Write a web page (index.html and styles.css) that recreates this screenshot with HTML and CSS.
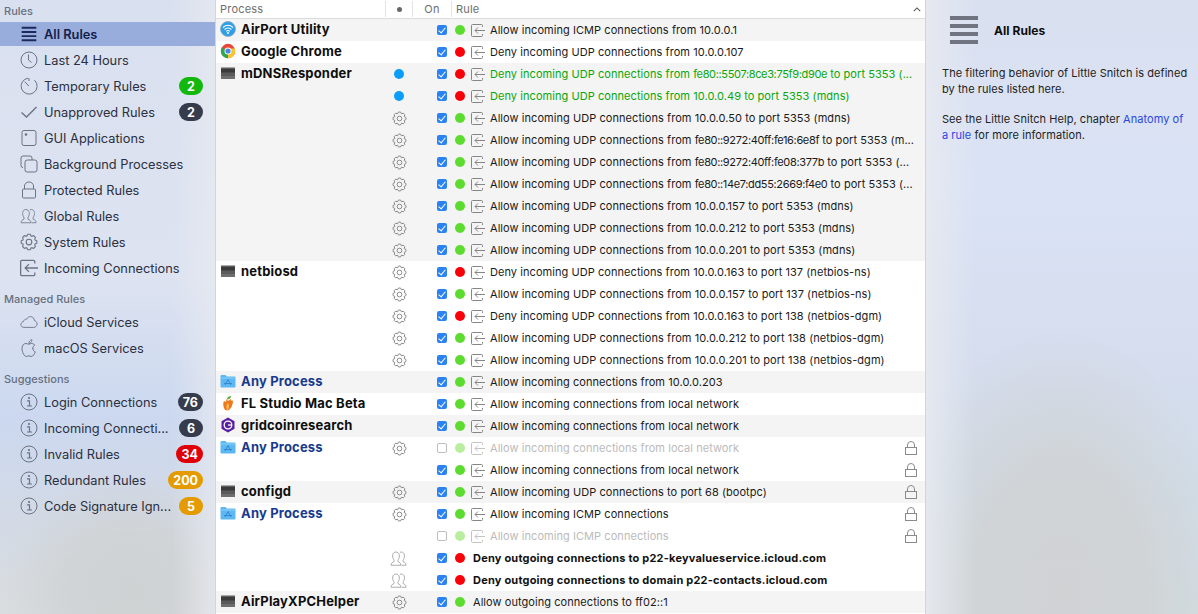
FILE: index.html
```html
<!DOCTYPE html>
<html lang="en">
<head>
<meta charset="utf-8">
<title>Little Snitch Rules</title>
<link rel="stylesheet" href="styles.css">
</head>
<body>
<svg class="defs" width="0" height="0" aria-hidden="true">
  <defs>
    <symbol id="i-list" viewBox="0 0 16 16"><path d="M1.5 2.5h13M1.5 6.2h13M1.5 9.9h13M1.5 13.5h13" fill="none" stroke="currentColor" stroke-width="1.7"/></symbol>
    <symbol id="i-clock" viewBox="0 0 18 18"><circle cx="9" cy="9" r="8" fill="none" stroke="currentColor"/><path d="M8.5 3.5V9l3 2.5" fill="none" stroke="currentColor"/></symbol>
    <symbol id="i-timer" viewBox="0 0 18 18"><path d="M8 1.2A8 8 0 1 0 14.5 3.2" fill="none" stroke="currentColor"/><path d="M4.6 4.8L9 9" fill="none" stroke="currentColor"/><path d="M9 1v3" fill="none" stroke="currentColor"/></symbol>
    <symbol id="i-check" viewBox="0 0 18 18"><path d="M1.5 9.5L6.5 14L16.5 4" fill="none" stroke="currentColor" stroke-width="1.4"/></symbol>
    <symbol id="i-app" viewBox="0 0 18 18"><rect x="2" y="1.5" width="14" height="15" rx="2" fill="none" stroke="currentColor"/><circle cx="6" cy="5.5" r="1.3" fill="currentColor"/></symbol>
    <symbol id="i-stack" viewBox="0 0 18 18"><path d="M3 12.5a2 2 0 0 1-2-2V3a2 2 0 0 1 2-2h7a2 2 0 0 1 2 2v2" fill="none" stroke="currentColor"/><rect x="5" y="5" width="12" height="12" rx="2.2" fill="none" stroke="currentColor"/></symbol>
    <symbol id="i-lock" viewBox="0 0 16 18"><path d="M3.5 8V5a4.5 4 0 0 1 9 0v3" fill="none" stroke="currentColor"/><rect x="1.5" y="8" width="13" height="9" rx="1" fill="none" stroke="currentColor"/></symbol>
    <symbol id="i-lock-sm" viewBox="0 0 12 14"><path d="M2.5 6.500V4a3.500 3.500 0 0 1 7 0v2.500" fill="none" stroke="currentColor"/><rect x=".5" y="6.500" width="11" height="7" fill="none" stroke="currentColor"/></symbol>
    <symbol id="i-people" viewBox="0 0 20 16"><path d="M6.5 15.5H1.2c0-2.5 1.5-3.3 3.2-4 .4-1 .2-1.700-.4-2.500C3 7.500 2.800 5.700 3 4 3.300 2 4.700.8 6.500.8S10 2 10.300 4c.2 1.700 0 3.500-1 5-.6.800-.8 1.500-.4 2.500 1.700.7 3.200 1.500 3.200 4H6.500z" fill="none" stroke="currentColor" stroke-width=".9"/><path d="M11 1.100c.5-.2 1-.3 1.500-.3 1.800 0 3.200 1.200 3.500 3.200.2 1.700 0 3.500-1 5-.6.800-.8 1.500-.4 2.500 1.700.7 3.200 1.500 3.200 4h-5" fill="none" stroke="currentColor" stroke-width=".9"/></symbol>
    <symbol id="i-gear" viewBox="0 0 16 16">
      <g fill="none" stroke="currentColor" stroke-width="1">
        <path d="M5.930 3.010L6.910 1.090H9.090L10.070 3.010"/>
        <path transform="rotate(45 8 8)" d="M5.930 3.010L6.910 1.090H9.090L10.070 3.010"/>
        <path transform="rotate(90 8 8)" d="M5.930 3.010L6.910 1.090H9.090L10.070 3.010"/>
        <path transform="rotate(135 8 8)" d="M5.930 3.010L6.910 1.090H9.090L10.070 3.010"/>
        <path transform="rotate(180 8 8)" d="M5.930 3.010L6.910 1.090H9.090L10.070 3.010"/>
        <path transform="rotate(225 8 8)" d="M5.930 3.010L6.910 1.090H9.090L10.070 3.010"/>
        <path transform="rotate(270 8 8)" d="M5.930 3.010L6.910 1.090H9.090L10.070 3.010"/>
        <path transform="rotate(315 8 8)" d="M5.930 3.010L6.910 1.090H9.090L10.070 3.010"/>
        <circle cx="8" cy="8" r="2.500"/>
      </g>
    </symbol>
    <symbol id="i-in" viewBox="0 0 14 13"><path d="M11.500 3V1.500a1 1 0 0 0-1-1H1.500a1 1 0 0 0-1 1v10a1 1 0 0 0 1 1h9a1 1 0 0 0 1-1V10" fill="none" stroke="currentColor"/><path d="M14 6.500H4M7 3.500l-3 3 3 3" fill="none" stroke="currentColor"/></symbol>
    <symbol id="i-cloud" viewBox="0 0 20 14"><path d="M4.500 13C2.300 13 1 11.500 1 9.800c0-1.700 1.200-3 2.800-3.100C4.400 4.500 6 3.600 7.300 3.900 8.300 2 9.800 1 11.500 1c2.600 0 4.400 2 4.500 4.500 1.800.3 3 1.800 3 3.700 0 2-1.500 3.800-3.700 3.800z" fill="none" stroke="currentColor"/></symbol>
    <symbol id="i-apple" viewBox="0 0 16 18"><path d="M11.800 9.500c0-1.800 1-2.700 2-3.400C13 5 11.700 4.500 10.500 4.500c-1.300 0-2 .7-2.800.7s-1.600-.7-2.800-.7C3 4.500 1 6.200 1 9.500c0 3.500 2.300 8 4.300 8 1 0 1.500-.7 2.500-.7s1.500.7 2.500.7c1.700 0 3.300-2.800 4-4.700-1.500-.6-2.500-1.800-2.500-3.800z" fill="none" stroke="currentColor"/><path d="M7.800 4.500C7.800 2.500 9 1 11 .6c.1 2-1.200 3.700-3.200 3.900z" fill="none" stroke="currentColor" stroke-width=".8"/></symbol>
    <symbol id="i-info" viewBox="0 0 18 18"><circle cx="9" cy="9" r="8" fill="none" stroke="currentColor"/><circle cx="9" cy="5" r="1.100" fill="currentColor"/><path d="M7 7.800h2.500v5M7 13h5" fill="none" stroke="currentColor" stroke-width="1.200"/></symbol>
    <symbol id="a-wifi" viewBox="0 0 16 16"><circle cx="8" cy="8" r="7.500" fill="#2f9fe8" stroke="#8aa9bd" stroke-width=".8"/><path d="M3 6.500c3-2.700 7-2.700 10 0M4.600 8.500c2-1.800 4.800-1.800 6.800 0M6.200 10.300c1-.9 2.600-.9 3.600 0" fill="none" stroke="#fff" stroke-width="1.100"/><circle cx="8" cy="12" r="1" fill="#fff"/></symbol>
    <symbol id="a-chrome" viewBox="0 0 16 16"><circle cx="8" cy="8" r="7.200" fill="#e8483a"/><path d="M8 8L1.800 4.400A7.200 7.200 0 0 0 8 15.200z" fill="#2fa750"/><path d="M8 8v7.200A7.200 7.200 0 0 0 14.800 5.500H8z" fill="#f7c62f"/><circle cx="8" cy="8" r="3.500" fill="#fff"/><circle cx="8" cy="8" r="2.600" fill="#4a86e8"/></symbol>
    <symbol id="a-term" viewBox="0 0 16 16">
      <rect x="1" y="2" width="14" height="12" fill="#5a5a5a"/>
      <rect x="1" y="2" width="14" height="1.500" fill="#a8a8a8"/>
      <rect x="1" y="3.500" width="14" height="4" fill="#3a3a3a"/>
      <rect x="1" y="11" width="14" height="3" fill="#6e6e6e"/>
    </symbol>
    <symbol id="a-folder" viewBox="0 0 16 15"><path d="M.5 2.500a1 1 0 0 1 1-1h4l1.300 1.500h7.700a1 1 0 0 1 1 1v9a1 1 0 0 1-1 1h-13a1 1 0 0 1-1-1z" fill="#5cb8f2"/><path d="M.5 4.500h15" stroke="#8bd0f8" stroke-width="1"/><path d="M8 6l-3 5.500M8 6l3 5.500M4 10h8" fill="none" stroke="#2f7fc9" stroke-width=".8"/></symbol>
    <symbol id="a-fl" viewBox="0 0 16 16"><path d="M5 15C3 12 2.800 8 4 6l2 1 .5-3L8 6l3-2 .5 2 1.500-.5C13 10 11 14 8 15.500z" fill="#ea7a1f"/><path d="M7 15c-1-3-.8-5 .5-7l1.500 2c0 2-.5 4-1 5z" fill="#fbbb4b"/><path d="M7 4.500C7 2.500 8.500 1 11 1 11 3 9.500 4.500 7 4.500z" fill="#5fae3a"/></symbol>
    <symbol id="a-grid" viewBox="0 0 16 16"><path d="M8 .5l6.500 3.700v7.600L8 15.500l-6.500-3.700V4.200z" fill="#5a1fa0"/><circle cx="8" cy="8" r="3.800" fill="none" stroke="#fff" stroke-width="1.300"/><path d="M8 8h3.500" stroke="#fff" stroke-width="1.300"/></symbol>
  </defs>
</svg>

<div class="window">
  <aside class="sidebar">
    <h2 class="side-head side-head-first">Rules</h2>
    <ul class="side-list">
      <li class="side-item selected"><svg class="side-icon"><use href="#i-list"/></svg><span class="side-label">All Rules</span></li>
      <li class="side-item"><svg class="side-icon"><use href="#i-clock"/></svg><span class="side-label">Last 24 Hours</span></li>
      <li class="side-item"><svg class="side-icon"><use href="#i-timer"/></svg><span class="side-label">Temporary Rules</span><span class="badge green">2</span></li>
      <li class="side-item"><svg class="side-icon"><use href="#i-check"/></svg><span class="side-label">Unapproved Rules</span><span class="badge dark">2</span></li>
      <li class="side-item"><svg class="side-icon"><use href="#i-app"/></svg><span class="side-label">GUI Applications</span></li>
      <li class="side-item"><svg class="side-icon"><use href="#i-stack"/></svg><span class="side-label">Background Processes</span></li>
      <li class="side-item"><svg class="side-icon"><use href="#i-lock"/></svg><span class="side-label">Protected Rules</span></li>
      <li class="side-item"><svg class="side-icon"><use href="#i-people"/></svg><span class="side-label">Global Rules</span></li>
      <li class="side-item"><svg class="side-icon"><use href="#i-gear"/></svg><span class="side-label">System Rules</span></li>
      <li class="side-item"><svg class="side-icon"><use href="#i-in"/></svg><span class="side-label">Incoming Connections</span></li>
    </ul>
    <h2 class="side-head">Managed Rules</h2>
    <ul class="side-list">
      <li class="side-item"><svg class="side-icon"><use href="#i-cloud"/></svg><span class="side-label">iCloud Services</span></li>
      <li class="side-item"><svg class="side-icon"><use href="#i-apple"/></svg><span class="side-label">macOS Services</span></li>
    </ul>
    <h2 class="side-head">Suggestions</h2>
    <ul class="side-list">
      <li class="side-item"><svg class="side-icon"><use href="#i-info"/></svg><span class="side-label">Login Connections</span><span class="badge dark">76</span></li>
      <li class="side-item"><svg class="side-icon"><use href="#i-info"/></svg><span class="side-label">Incoming Connecti...</span><span class="badge dark">6</span></li>
      <li class="side-item"><svg class="side-icon"><use href="#i-info"/></svg><span class="side-label">Invalid Rules</span><span class="badge red">34</span></li>
      <li class="side-item"><svg class="side-icon"><use href="#i-info"/></svg><span class="side-label">Redundant Rules</span><span class="badge orange">200</span></li>
      <li class="side-item"><svg class="side-icon"><use href="#i-info"/></svg><span class="side-label">Code Signature Ign...</span><span class="badge orange">5</span></li>
    </ul>
  </aside>

  <main class="table">
    <div class="thead">
      <div class="th th-process">Process</div>
      <div class="th th-dot"><span class="head-dot"></span></div>
      <div class="th th-on">On</div>
      <div class="th th-rule">Rule<svg class="sort" viewBox="0 0 10 6"><path d="M1 5l4-4 4 4" fill="none" stroke="currentColor" stroke-width="1.300"/></svg></div>
    </div>

    <div class="group alt">
      <div class="row"><div class="proc"><svg class="app"><use href="#a-wifi"/></svg><b class="name">AirPort Utility</b></div><div class="mark"></div><div class="on"><span class="box"></span></div><span class="st allow"></span><svg class="dir"><use href="#i-in"/></svg><span class="text">Allow incoming ICMP connections from 10.0.0.1</span></div>
    </div>
    <div class="group">
      <div class="row"><div class="proc"><svg class="app"><use href="#a-chrome"/></svg><b class="name">Google Chrome</b></div><div class="mark"></div><div class="on"><span class="box"></span></div><span class="st deny"></span><svg class="dir"><use href="#i-in"/></svg><span class="text">Deny incoming UDP connections from 10.0.0.107</span></div>
    </div>
    <div class="group alt">
      <div class="row"><div class="proc"><svg class="app"><use href="#a-term"/></svg><b class="name">mDNSResponder</b></div><div class="mark"><span class="blue"></span></div><div class="on"><span class="box"></span></div><span class="st deny"></span><svg class="dir"><use href="#i-in"/></svg><span class="text new">Deny incoming UDP connections from <span class="addr">fe80::5507:8ce3:75f9:d90e</span> to port 5353 (...</span></div>
      <div class="row"><div class="proc"></div><div class="mark"><span class="blue"></span></div><div class="on"><span class="box"></span></div><span class="st deny"></span><svg class="dir"><use href="#i-in"/></svg><span class="text new">Deny incoming UDP connections from 10.0.0.49 to port 5353 (mdns)</span></div>
      <div class="row"><div class="proc"></div><div class="mark"><svg class="gear"><use href="#i-gear"/></svg></div><div class="on"><span class="box"></span></div><span class="st allow"></span><svg class="dir"><use href="#i-in"/></svg><span class="text">Allow incoming UDP connections from 10.0.0.50 to port 5353 (mdns)</span></div>
      <div class="row"><div class="proc"></div><div class="mark"><svg class="gear"><use href="#i-gear"/></svg></div><div class="on"><span class="box"></span></div><span class="st allow"></span><svg class="dir"><use href="#i-in"/></svg><span class="text">Allow incoming UDP connections from <span class="addr">fe80::9272:40ff:fe16:6e8f</span> to port 5353 (m...</span></div>
      <div class="row"><div class="proc"></div><div class="mark"><svg class="gear"><use href="#i-gear"/></svg></div><div class="on"><span class="box"></span></div><span class="st allow"></span><svg class="dir"><use href="#i-in"/></svg><span class="text">Allow incoming UDP connections from <span class="addr">fe80::9272:40ff:fe08:377b</span> to port 5353 (...</span></div>
      <div class="row"><div class="proc"></div><div class="mark"><svg class="gear"><use href="#i-gear"/></svg></div><div class="on"><span class="box"></span></div><span class="st allow"></span><svg class="dir"><use href="#i-in"/></svg><span class="text">Allow incoming UDP connections from <span class="addr">fe80::14e7:dd55:2669:f4e0</span> to port 5353 (...</span></div>
      <div class="row"><div class="proc"></div><div class="mark"><svg class="gear"><use href="#i-gear"/></svg></div><div class="on"><span class="box"></span></div><span class="st allow"></span><svg class="dir"><use href="#i-in"/></svg><span class="text">Allow incoming UDP connections from 10.0.0.157 to port 5353 (mdns)</span></div>
      <div class="row"><div class="proc"></div><div class="mark"><svg class="gear"><use href="#i-gear"/></svg></div><div class="on"><span class="box"></span></div><span class="st allow"></span><svg class="dir"><use href="#i-in"/></svg><span class="text">Allow incoming UDP connections from 10.0.0.212 to port 5353 (mdns)</span></div>
      <div class="row"><div class="proc"></div><div class="mark"><svg class="gear"><use href="#i-gear"/></svg></div><div class="on"><span class="box"></span></div><span class="st allow"></span><svg class="dir"><use href="#i-in"/></svg><span class="text">Allow incoming UDP connections from 10.0.0.201 to port 5353 (mdns)</span></div>
    </div>
    <div class="group">
      <div class="row"><div class="proc"><svg class="app"><use href="#a-term"/></svg><b class="name">netbiosd</b></div><div class="mark"><svg class="gear"><use href="#i-gear"/></svg></div><div class="on"><span class="box"></span></div><span class="st deny"></span><svg class="dir"><use href="#i-in"/></svg><span class="text">Deny incoming UDP connections from 10.0.0.163 to port 137 (netbios-ns)</span></div>
      <div class="row"><div class="proc"></div><div class="mark"><svg class="gear"><use href="#i-gear"/></svg></div><div class="on"><span class="box"></span></div><span class="st allow"></span><svg class="dir"><use href="#i-in"/></svg><span class="text">Allow incoming UDP connections from 10.0.0.157 to port 137 (netbios-ns)</span></div>
      <div class="row"><div class="proc"></div><div class="mark"><svg class="gear"><use href="#i-gear"/></svg></div><div class="on"><span class="box"></span></div><span class="st deny"></span><svg class="dir"><use href="#i-in"/></svg><span class="text">Deny incoming UDP connections from 10.0.0.163 to port 138 (netbios-dgm)</span></div>
      <div class="row"><div class="proc"></div><div class="mark"><svg class="gear"><use href="#i-gear"/></svg></div><div class="on"><span class="box"></span></div><span class="st allow"></span><svg class="dir"><use href="#i-in"/></svg><span class="text">Allow incoming UDP connections from 10.0.0.212 to port 138 (netbios-dgm)</span></div>
      <div class="row"><div class="proc"></div><div class="mark"><svg class="gear"><use href="#i-gear"/></svg></div><div class="on"><span class="box"></span></div><span class="st allow"></span><svg class="dir"><use href="#i-in"/></svg><span class="text">Allow incoming UDP connections from 10.0.0.201 to port 138 (netbios-dgm)</span></div>
    </div>
    <div class="group alt">
      <div class="row"><div class="proc"><svg class="app"><use href="#a-folder"/></svg><b class="name any">Any Process</b></div><div class="mark"></div><div class="on"><span class="box"></span></div><span class="st allow"></span><svg class="dir"><use href="#i-in"/></svg><span class="text">Allow incoming connections from 10.0.0.203</span></div>
    </div>
    <div class="group">
      <div class="row"><div class="proc"><svg class="app"><use href="#a-fl"/></svg><b class="name">FL Studio Mac Beta</b></div><div class="mark"></div><div class="on"><span class="box"></span></div><span class="st allow"></span><svg class="dir"><use href="#i-in"/></svg><span class="text">Allow incoming connections from local network</span></div>
    </div>
    <div class="group alt">
      <div class="row"><div class="proc"><svg class="app"><use href="#a-grid"/></svg><b class="name">gridcoinresearch</b></div><div class="mark"></div><div class="on"><span class="box"></span></div><span class="st allow"></span><svg class="dir"><use href="#i-in"/></svg><span class="text">Allow incoming connections from local network</span></div>
    </div>
    <div class="group">
      <div class="row off"><div class="proc"><svg class="app"><use href="#a-folder"/></svg><b class="name any">Any Process</b></div><div class="mark"><svg class="gear"><use href="#i-gear"/></svg></div><div class="on"><span class="box"></span></div><span class="st allow"></span><svg class="dir"><use href="#i-in"/></svg><span class="text">Allow incoming connections from local network</span><svg class="lock"><use href="#i-lock-sm"/></svg></div>
      <div class="row"><div class="proc"></div><div class="mark"></div><div class="on"><span class="box"></span></div><span class="st allow"></span><svg class="dir"><use href="#i-in"/></svg><span class="text">Allow incoming connections from local network</span><svg class="lock"><use href="#i-lock-sm"/></svg></div>
    </div>
    <div class="group alt">
      <div class="row"><div class="proc"><svg class="app"><use href="#a-term"/></svg><b class="name">configd</b></div><div class="mark"><svg class="gear"><use href="#i-gear"/></svg></div><div class="on"><span class="box"></span></div><span class="st allow"></span><svg class="dir"><use href="#i-in"/></svg><span class="text">Allow incoming UDP connections to port 68 (bootpc)</span><svg class="lock"><use href="#i-lock-sm"/></svg></div>
    </div>
    <div class="group">
      <div class="row"><div class="proc"><svg class="app"><use href="#a-folder"/></svg><b class="name any">Any Process</b></div><div class="mark"><svg class="gear"><use href="#i-gear"/></svg></div><div class="on"><span class="box"></span></div><span class="st allow"></span><svg class="dir"><use href="#i-in"/></svg><span class="text">Allow incoming ICMP connections</span><svg class="lock"><use href="#i-lock-sm"/></svg></div>
      <div class="row off"><div class="proc"></div><div class="mark"></div><div class="on"><span class="box"></span></div><span class="st allow"></span><svg class="dir"><use href="#i-in"/></svg><span class="text">Allow incoming ICMP connections</span><svg class="lock"><use href="#i-lock-sm"/></svg></div>
      <div class="row"><div class="proc"></div><div class="mark"><svg class="people"><use href="#i-people"/></svg></div><div class="on"><span class="box"></span></div><span class="st deny"></span><span class="text strong">Deny outgoing connections to p22-keyvalueservice.icloud.com</span></div>
      <div class="row"><div class="proc"></div><div class="mark"><svg class="people"><use href="#i-people"/></svg></div><div class="on"><span class="box"></span></div><span class="st deny"></span><span class="text strong">Deny outgoing connections to domain p22-contacts.icloud.com</span></div>
    </div>
    <div class="group alt">
      <div class="row"><div class="proc"><svg class="app"><use href="#a-term"/></svg><b class="name">AirPlayXPCHelper</b></div><div class="mark"><svg class="gear"><use href="#i-gear"/></svg></div><div class="on"><span class="box"></span></div><span class="st allow"></span><span class="text outgoing">Allow outgoing connections to ff02::1</span></div>
    </div>
  </main>

  <aside class="detail">
    <div class="detail-head">
      <svg class="detail-icon" viewBox="0 0 28 28"><path d="M0 2h28M0 10h28M0 18h28M0 26h28" stroke="#6f7480" stroke-width="4" fill="none"/></svg>
      <h1 class="detail-title">All Rules</h1>
    </div>
    <p class="detail-text">The filtering behavior of Little Snitch is defined by the rules listed here.</p>
    <p class="detail-text">See the Little Snitch Help, chapter <a class="link" href="#">Anatomy of a rule</a> for more information.</p>
  </aside>
</div>
</body>
</html>
```
FILE: styles.css
```css
* { box-sizing: border-box; }
html, body { margin: 0; height: 100%; overflow: hidden; }
body { font-family: Inter, "Liberation Sans", sans-serif; font-feature-settings: "calt" 0, "liga" 0; background: #fff; color: #111; }
.defs { position: absolute; }
.window { display: flex; width: 1198px; height: 614px; }

.sidebar {
  flex: 0 0 216px;
  height: 614px;
  border-right: 1px solid #d2d5da;
  background:
    linear-gradient(90deg, rgba(232,234,240,0) 80%, rgba(232,234,240,.7) 100%),
    radial-gradient(ellipse 130px 120px at 130px 590px, #cfd2d3 0%, rgba(207,210,211,.85) 45%, rgba(207,210,211,0) 100%),
    linear-gradient(180deg, #d9e0ef 0%, #dde3f1 45%, #cbd8ef 68%, #d3dae6 85%, #dadddf 100%);
  color: #2b3040;
}
.side-head { margin: 0; height: 18px; padding-left: 4px; font-size: 11px; line-height: 18px; font-weight: 500; color: #67707f; }
.side-head-first { height: 21px; line-height: 22px; }
.side-head:not(.side-head-first) { margin-top: 9px; margin-bottom: 1px; }
.side-list { list-style: none; margin: 0; padding: 0; }
.side-item { display: flex; align-items: center; height: 26px; padding: 0 12px 0 20px; font-size: 12.800px; }
.side-item.selected { background: #99addc; background-clip: content-box; padding: 1px 0 1px 0; color: #15204a; font-weight: 600; }
.side-item.selected .side-icon { margin-left: 20px; color: #1d2a5c; }
.side-icon { flex: 0 0 18px; width: 18px; height: 18px; margin-right: 6px; color: #6c7382; }
.side-label { flex: 1; white-space: nowrap; }
.badge { display: flex; align-items: center; justify-content: center; min-width: 24px; height: 18px; padding: 0 5px; border-radius: 9px; color: #fff; font-size: 12.500px; font-weight: 700; }
.green { background: #12b80c; }
.dark { background: #363c4c; }
.red { background: #e00008; }
.orange { background: #e39b00; }

.table { flex: 0 0 710px; height: 614px; background: #fff; overflow: hidden; border-right: 1px solid #d4d4d6; }
.thead { display: flex; height: 19px; border-bottom: 1px solid #dcdcdc; font-size: 11px; color: #6e6e6e; letter-spacing: .2px; }
.th { display: flex; align-items: center; height: 16px; margin-top: 1px; border-right: 1px solid #e4e4e4; }
.th-process { flex: 0 0 170px; padding-left: 4px; }
.th-dot { flex: 0 0 27px; justify-content: center; }
.head-dot { width: 5px; height: 5px; border-radius: 50%; background: #666; }
.th-on { flex: 0 0 39px; justify-content: center; }
.th-rule { flex: 1; padding-left: 4px; border-right: 0; justify-content: space-between; padding-right: 4px; }
.sort { width: 8px; height: 5px; color: #555; }

.group { background: #fff; }
.group.alt { background: #f4f4f4; }
.row { display: flex; align-items: center; height: 22px; font-size: 11px; color: #1a1a1a; }
.proc { display: flex; align-items: center; flex: 0 0 170px; padding-left: 4px; }
.app { flex: 0 0 16px; width: 16px; height: 16px; margin-right: 5px; margin-bottom: 2px; }
.name { font-size: 13px; font-weight: 700; color: #0e0e0e; white-space: nowrap; letter-spacing: .18px; margin-bottom: 2px; }
.name.any { color: #163a8e; }
.mark { display: flex; align-items: center; justify-content: center; flex: 0 0 27px; height: 22px; padding-right: 1px; }
.blue { width: 10px; height: 10px; border-radius: 50%; background: #0a9dfb; }
.gear { width: 15px; height: 15px; color: #858585; }
.people { width: 18px; height: 15px; color: #9a9a9a; }
.on { display: flex; justify-content: center; flex: 0 0 39px; padding-left: 19px; }
.box { position: relative; display: block; width: 10px; height: 10px; border-radius: 2px; background: #2a83f0; }
.box::after { content: ""; position: absolute; left: 3px; top: 1px; width: 3px; height: 6px; border: solid #fff; border-width: 0 1.500px 1.500px 0; transform: rotate(40deg); }
.st { flex: 0 0 10px; width: 10px; height: 10px; margin-left: 3px; border-radius: 50%; }
.allow { background: #5cdc2e; }
.deny { background: #fb0007; }
.dir { flex: 0 0 14px; width: 14px; height: 13px; margin-left: 6px; color: #858585; }
.text { margin-left: 5px; white-space: nowrap; letter-spacing: .06px; }
.addr { letter-spacing: -.35px; }
.text.new { color: #0aa70a; }
.text.strong { margin-left: 8px; font-weight: 700; color: #111; letter-spacing: .2px; }
.text.outgoing { margin-left: 8px; }
.lock { flex: 0 0 12px; width: 12px; height: 14px; margin-left: auto; margin-right: 8px; color: #8a8a8a; }
.off .box { background: #fff; border: 1px solid #bdbdbd; }
.off .box::after { display: none; }
.off .st { background: #b9ee9f; }
.off .dir { color: #c4c4c4; }
.off .text { color: #bbb; }

.detail {
  flex: 1;
  height: 614px;
  padding: 16px 9px 0 16px;
  background:
    linear-gradient(90deg, rgba(232,234,240,.85) 0%, rgba(232,234,240,0) 18%),
    radial-gradient(ellipse 170px 260px at 135px 590px, #d0d2d4 0%, rgba(208,210,212,.8) 50%, rgba(208,210,212,0) 100%),
    linear-gradient(180deg, #d9e0f0 0%, #dae3f5 30%, #d5ddee 60%, #d0dde8 80%, #d2dde2 100%);
  color: #222;
  font-size: 11px;
  line-height: 16px;
  letter-spacing: .05px;
}
.detail-head { display: flex; align-items: center; height: 28px; padding-left: 8px; margin-bottom: 21px; }
.detail-icon { width: 28px; height: 28px; margin-right: 16px; }
.detail-title { margin: 1px 0 0; font-size: 12px; font-weight: 700; color: #0d0d0d; }
.detail-text { margin: 0 0 14px; }
.link { color: #2a46e0; text-decoration: none; }
```
